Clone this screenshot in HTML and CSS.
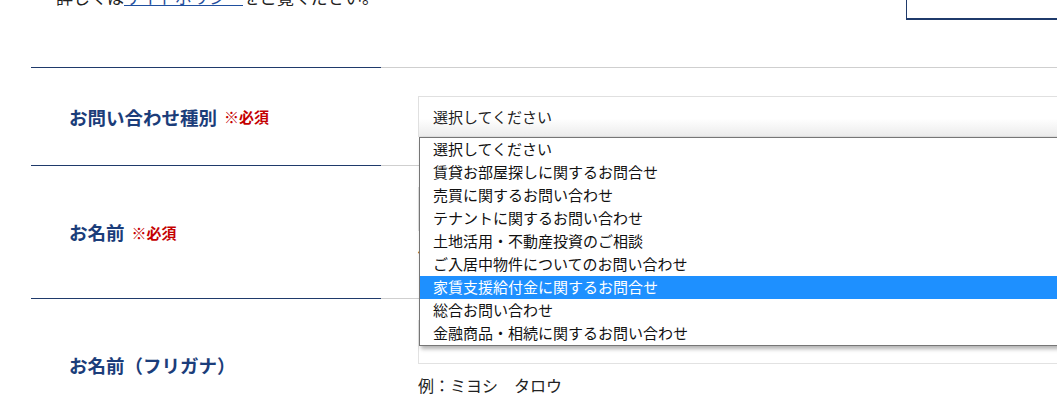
FILE: index.html
```html
<!DOCTYPE html>
<html lang="ja">
<head>
    <meta charset="UTF-8">
    <meta name="viewport" content="width=device-width, initial-scale=1.0">
    <title>お問い合わせ</title>
    <link rel="stylesheet" href="styles.css">
</head>
<body>
    <div class="page">
        <div class="intro">
            <p class="note">詳しくは<a href="#">サイトポリシー</a>をご覧ください。</p>
            <div class="side-box"></div>
        </div>

        <div class="form">
            <div class="row">
                <div class="label">お問い合わせ種別 <span class="req">※必須</span></div>
                <div class="field field-select">
                    <div class="select-wrap">
                        <div class="select">選択してください</div>
                        <!-- 開いたプルダウン -->
                        <ul class="options">
                            <li>選択してください</li>
                            <li>賃貸お部屋探しに関するお問合せ</li>
                            <li>売買に関するお問い合わせ</li>
                            <li>テナントに関するお問い合わせ</li>
                            <li>土地活用・不動産投資のご相談</li>
                            <li>ご入居中物件についてのお問い合わせ</li>
                            <li class="active">家賃支援給付金に関するお問合せ</li>
                            <li>総合お問い合わせ</li>
                            <li>金融商品・相続に関するお問い合わせ</li>
                        </ul>
                    </div>
                </div>
            </div>

            <div class="row">
                <div class="label">お名前 <span class="req">※必須</span></div>
                <div class="field">
                    <input type="text" class="text-input">
                    <p class="example">例：三好　太郎</p>
                </div>
            </div>

            <div class="row">
                <div class="label">お名前（フリガナ）</div>
                <div class="field">
                    <input type="text" class="text-input">
                    <p class="example">例：ミヨシ　タロウ</p>
                </div>
            </div>
        </div>
    </div>
</body>
</html>
```

FILE: styles.css
```css
body {
    margin: 0;
    font-family: "Noto Sans CJK JP", "Noto Sans", sans-serif;
    color: #222;
    background: #fff;
    overflow: hidden;
}

.page {
    width: 1100px;
    margin-left: 31px;
}

.intro {
    display: flex;
    align-items: flex-start;
    height: 67px;
}
.note {
    flex: 1;
    margin: -16px 0 0;
    padding-left: 25px;
    font-size: 17px;
    line-height: 25px;
}
.note a {
    color: #1f4f9e;
    text-decoration: underline;
}
.side-box {
    width: 225px;
    height: 40px;
    margin-top: -20px;
    border: 1px solid #1f3a6b;
    border-width: 0 0 2px 1px;
    box-sizing: border-box;
}

.row {
    display: grid;
    grid-template-columns: 350px 1fr;
}
.label {
    display: flex;
    align-items: center;
    padding-left: 38px;
    border-top: 1px solid #1f3a6b;
    font-size: 18.5px;
    font-weight: bold;
    color: #1b3d7a;
}
.req {
    margin-left: 7px;
    font-size: 15px;
    color: #c40000;
}
.field {
    border-top: 1px solid #cfcfcf;
    padding: 21px 38px 0 37px;
}
.field-select {
    padding: 28px 38px 28px 37px;
}

.select-wrap {
    position: relative;
}
.select {
    height: 41px;
    box-sizing: border-box;
    padding: 0 14px;
    border: 1px solid #e0e0e0;
    background: linear-gradient(to bottom, #fff 55%, #ececec);
    font-size: 15px;
    line-height: 39px;
    color: #222;
}
.options {
    position: absolute;
    top: 100%;
    left: 1px;
    right: 0;
    margin: 0;
    padding: 0;
    list-style: none;
    background: #fff;
    border: 1px solid #767676;
    box-shadow: 2px 3px 4px rgba(0, 0, 0, 0.3);
    z-index: 5;
}
.options li {
    height: 23px;
    padding-left: 13px;
    font-size: 15px;
    line-height: 22px;
    color: #111;
}
.options li.active {
    background: #1e90ff;
    color: #fff;
}

.text-input {
    display: block;
    width: 100%;
    height: 44px;
    box-sizing: border-box;
    border: 1px solid #e2e2e2;
    background: #fff;
}
.example {
    margin: 9px 0 34px;
    font-size: 16px;
    line-height: 24px;
}
```
